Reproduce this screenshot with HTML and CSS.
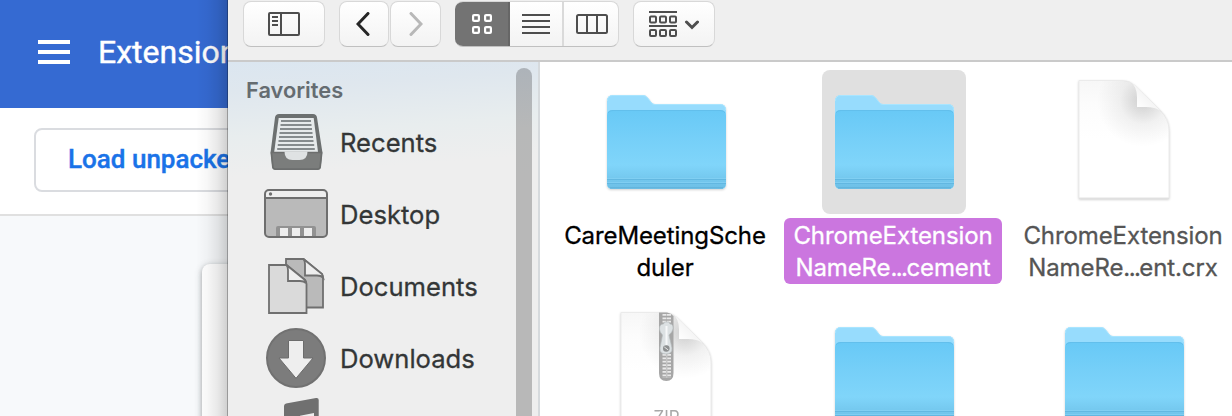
FILE: index.html
```html
<!DOCTYPE html>
<html lang="en">
<head>
<meta charset="utf-8">
<title>Extensions</title>
<link rel="stylesheet" href="styles.css">
</head>
<body>
<svg class="defs" width="0" height="0" aria-hidden="true">
  <defs>
    <linearGradient id="folderFront" x1="0" y1="0" x2="0" y2="1">
      <stop offset="0" stop-color="#68c9f6"/>
      <stop offset=".35" stop-color="#75cff8"/>
      <stop offset=".7" stop-color="#80d5fa"/>
      <stop offset=".86" stop-color="#75c9ef"/>
      <stop offset="1" stop-color="#6dbfe6"/>
    </linearGradient>
    <linearGradient id="paper" x1="0" y1="0" x2="0" y2="1">
      <stop offset="0" stop-color="#f7f7f7"/>
      <stop offset=".2" stop-color="#fcfcfc"/>
      <stop offset=".5" stop-color="#ffffff"/>
    </linearGradient>
    <radialGradient id="foldShade" gradientUnits="userSpaceOnUse" cx="91" cy="31" r="46">
      <stop offset="0" stop-color="#000" stop-opacity=".18"/>
      <stop offset=".2" stop-color="#000" stop-opacity=".13"/>
      <stop offset=".5" stop-color="#000" stop-opacity=".05"/>
      <stop offset="1" stop-color="#000" stop-opacity="0"/>
    </radialGradient>
    <linearGradient id="fold" gradientUnits="userSpaceOnUse" x1="85" y1="38" x2="96" y2="27">
      <stop offset="0" stop-color="#ffffff"/>
      <stop offset="1" stop-color="#f4f4f4"/>
    </linearGradient>
    <symbol id="folder" viewBox="0 0 144 144">
      <path d="M13 31q0-6 6-6h30q3 0 5 3l4 5q1 1 3 1h65q6 0 6 6v74q0 5-5 5H18q-5 0-5-5z" fill="#97dcfd"/>
      <path d="M13.500 31q0-5.500 5.500-5.500h30q3 0 5 3l4 5q1 1 3 1h65q5.500 0 5.500 5.500" fill="none" stroke="#a9e5ff"/>
      <path d="M13 46q0-6 5-6h109q5 0 5 6v67q0 5-4 5.500H17q-4-.5-4-5.500z" fill="url(#folderFront)"/>
      <path d="M14 43q1-2.500 5-2.500h107q4 0 5 2.500" fill="none" stroke="#62bfec"/>
      <path d="M13 109.500h119M13 113.500h119" stroke="#5fb5df" opacity=".8"/>
      <path d="M13 108.500h119M13 112.500h119" stroke="#86d3f5" opacity=".7"/>
      <path d="M16 118h113" stroke="#58abd3"/>
    </symbol>
    <symbol id="sheet" viewBox="0 0 144 144">
      <path d="M27 10.500h44q7 0 12 5L108 40q9 9 9 20v68H27z" fill="url(#paper)" stroke="#ebebeb"/>
      <path d="M27 11h44q7 0 12 5L108 40q8.500 9 8.500 20v25H27z" fill="url(#foldShade)"/>
      <path d="M79 12.500Q85 17 85 27v10h9q9 0 15 4L83.500 16z" fill="url(#fold)"/>
      <path d="M27 128.300h90" stroke="#e2e2e2"/>
    </symbol>
  </defs>
</svg>

<main class="browser">
  <header class="app-bar">
    <svg class="menu-icon" width="32" height="24" viewBox="0 0 32 24"><path d="M0 2h32M0 12h32M0 22h32" stroke="#fff" stroke-width="4"/></svg>
    <h1 class="app-title">Extensions</h1>
  </header>
  <div class="dev-bar"><button class="load-button">Load unpacked</button></div>
  <section class="cards"><article class="card"></article></section>
</main>

<section class="finder">
  <div class="toolbar">
    <div class="tool tool-sidebar">
      <svg width="32" height="24" viewBox="0 0 32 24" fill="none" stroke="#4e4e4e" stroke-width="2"><rect x="1" y="1" width="30" height="22" rx="1"/><path d="M13 1v22M4 5h6M4 9h6M4 13h6"/></svg>
    </div>
    <div class="nav">
      <div class="tool tool-back">
        <svg width="14" height="24" viewBox="0 0 14 24" fill="none" stroke="#262626" stroke-width="3" stroke-linecap="round"><path d="M12 1.500 2 12l10 10.500"/></svg>
      </div>
      <div class="tool tool-forward">
        <svg width="14" height="24" viewBox="0 0 14 24" fill="none" stroke="#b8b8b8" stroke-width="3" stroke-linecap="round"><path d="M2 1.500 12 12 2 22.500"/></svg>
      </div>
    </div>
    <div class="tool views">
      <div class="view view-active">
        <svg width="20" height="20" viewBox="0 0 20 20" fill="none" stroke="#fff" stroke-width="2.200"><rect x="1.100" y="1.100" width="5.800" height="5.800" rx="1"/><rect x="13.100" y="1.100" width="5.800" height="5.800" rx="1"/><rect x="1.100" y="13.100" width="5.800" height="5.800" rx="1"/><rect x="13.100" y="13.100" width="5.800" height="5.800" rx="1"/></svg>
      </div>
      <div class="view">
        <svg width="28" height="20" viewBox="0 0 28 20" stroke="#4e4e4e" stroke-width="2"><path d="M0 1h28M0 7h28M0 13h28M0 19h28"/></svg>
      </div>
      <div class="view view-last">
        <svg width="32" height="20" viewBox="0 0 32 20" fill="none" stroke="#4e4e4e" stroke-width="2"><rect x="1" y="1" width="30" height="18" rx="1.500"/><path d="M11 1v18M21 1v18"/></svg>
      </div>
    </div>
    <div class="tool tool-group">
      <svg width="50" height="26" viewBox="0 0 50 26" fill="none" stroke="#4e4e4e" stroke-width="2"><path d="M0 1h28M0 15h28"/><rect x="1" y="5.500" width="6" height="6" rx="1"/><rect x="11" y="5.500" width="6" height="6" rx="1"/><rect x="21" y="5.500" width="6" height="6" rx="1"/><rect x="1" y="19" width="6" height="6" rx="1"/><rect x="11" y="19" width="6" height="6" rx="1"/><rect x="21" y="19" width="6" height="6" rx="1"/><path d="m37.500 11 5.500 5.500 5.500-5.500" stroke-width="3" stroke-linecap="round"/></svg>
    </div>
  </div>

  <div class="panes">
    <nav class="sidebar">
      <div class="places">
        <h2 class="places-title">Favorites</h2>
        <div class="place">
          <svg width="64" height="72" viewBox="0 0 64 72">
            <path d="M15 7h34q3.500 0 4 3.500L58.500 46 57 60q-.4 3-3.500 3h-42Q8.400 63 8 60L6.500 46 11 10.500Q11.500 7 15 7z" fill="#6c7070"/>
            <path d="M14.700 11h35L54 45H10.200z" fill="#e6eaeb"/>
            <path d="M17 14h30M16.500 18h31M16 22h32M15.500 26h33M15 30h34M14.500 34h35M13.800 38h36.400M13.200 42h37.600" stroke="#858b8d" stroke-width="2"/>
            <path d="M7.500 45.500h50L56 60q-.3 2-2.500 2h-42Q9.300 62 9 60z" fill="#7b7d7c" stroke="#6c6e6d" stroke-width="1.500"/>
            <path d="M20.500 44.500h23q0 8.500-8 8.500h-7q-8 0-8-8.500z" fill="#dfe2e3"/>
          </svg>
          <span class="place-name">Recents</span>
        </div>
        <div class="place">
          <svg width="64" height="72" viewBox="0 0 64 72">
            <rect x="1" y="11" width="62" height="47" rx="4" fill="#bababa"/>
            <path d="M1 19v-4q0-4 4-4h54q4 0 4 4v4z" fill="#eee"/>
            <path d="M12 58V49q0-2 2-2h36q2 0 2 2v9z" fill="#929292"/>
            <path d="M16 49h8v8h-8zM28 49h8v8h-8zM40 49h8v8h-8z" fill="#eee"/>
            <rect x="1" y="11" width="62" height="47" rx="4" fill="none" stroke="#6e6e6e" stroke-width="2"/>
            <path d="M1 19h62" stroke="#6e6e6e" stroke-width="2"/><circle cx="6.500" cy="15" r="1.700" fill="#6e6e6e"/>
          </svg>
          <span class="place-name">Desktop</span>
        </div>
        <div class="place">
          <svg width="64" height="72" viewBox="0 0 64 72" stroke="#6f6f6f" stroke-width="1.800">
            <path d="M22 8h17.500L58 23q1 1.500 1 4v29.500H22z" fill="#bababa"/>
            <path d="M39.500 8q1.500 2 1.500 5v11.500h12q4 0 6 2L58 23z" fill="#eee"/>
            <path d="M5 14h17.500L41 29q1.500 1.500 1.500 4v29H5z" fill="#dadada"/>
            <path d="M22.500 14q1.500 2 1.500 5v11h12q4 0 6 2L41 29z" fill="#eee"/>
          </svg>
          <span class="place-name">Documents</span>
        </div>
        <div class="place">
          <svg width="64" height="72" viewBox="0 0 64 72">
            <circle cx="32" cy="35" r="29" fill="#7c7c7c" stroke="#717171" stroke-width="2"/>
            <path d="M24.500 17.500h15V35H49L32 55.300 15 35h9.500z" fill="#eee" stroke="#6c6c6c"/>
          </svg>
          <span class="place-name">Downloads</span>
        </div>
        <div class="place">
          <svg width="64" height="72" viewBox="0 0 64 72">
            <path d="M20 11q0-2 2-2.500L52 3q2.700-.4 2.700 2v46H50V18L36 20.700V56H20z" fill="#707070"/>
          </svg>
        </div>
      </div>
      <div class="scroll-thumb"></div>
    </nav>

    <div class="files">
      <div class="file">
        <svg class="thumb" width="144" height="144"><use href="#folder"/></svg>
        <div class="file-name">CareMeetingSche<br>duler</div>
      </div>
      <div class="file file-selected">
        <svg class="thumb" width="144" height="144"><use href="#folder"/></svg>
        <div class="file-name">ChromeExtension<br>NameRe<span class="dots">...</span>cement</div>
      </div>
      <div class="file file-muted">
        <svg class="thumb" width="144" height="144"><use href="#sheet"/></svg>
        <div class="file-name">ChromeExtension<br>NameRe<span class="dots">...</span>ent.crx</div>
      </div>
      <div class="file">
        <svg class="thumb" width="144" height="144">
          <use href="#sheet"/>
          <path d="M65 10.500h8q5 1 6.500 4V71q0 8-7.200 8T65 71z" fill="#a6a6a6"/>
          <path d="M70.500 12v11M70.500 52v24M75 12v11M75 52v24" stroke="#e9e9e9" stroke-width="4" stroke-dasharray="1.800 1.600"/>
          <path d="M72.700 52v24" stroke="#c4c4c4" stroke-width="1.500"/>
          <path d="M65.500 27q0-5 4-5l1-2h4.500l1 2q3.500 0 3 5-.5 3-4 6l3 13q.5 6-6 6t-6-6l2.500-13q-3-3-3-6z" fill="#dce1e3" stroke="#b4babc" stroke-width=".7"/>
          <path d="M72.500 24v19" stroke="#f6f8f9" stroke-width="2"/>
          <circle cx="72.300" cy="46.500" r="3.300" fill="#8d9091"/><path d="m70.300 45 4 3" stroke="#e4e4e4"/>
          <text class="badge" x="72.500" y="121" text-anchor="middle">ZIP</text>
        </svg>
      </div>
      <div class="file">
        <svg class="thumb" width="144" height="144"><use href="#folder"/></svg>
      </div>
      <div class="file">
        <svg class="thumb" width="144" height="144"><use href="#folder"/></svg>
      </div>
    </div>
  </div>
</section>
</body>
</html>
```
FILE: styles.css
```css
* { box-sizing: border-box; }
html { height: 416px; overflow: hidden; }
body {
  margin: 0;
  width: 1232px;
  height: 416px;
  overflow: hidden;
  position: relative;
  background: #f7f9fb;
}
svg { display: block; flex: none; }
.defs { position: absolute; }

/* Browser page */
.browser { height: 416px; overflow: hidden; font-family: Roboto, sans-serif; }
.app-bar {
  height: 108px;
  padding: 0 38px 4px;
  display: flex;
  align-items: center;
  gap: 28px;
  background: #356ad2;
}
.app-title {
  margin: 0;
  font-size: 32px;
  font-weight: 400;
  line-height: 40px;
  color: #fff;
  -webkit-text-stroke: .4px #fff;
}
.dev-bar {
  height: 108px;
  padding: 20px 34px 0;
  background: #fff;
  border-bottom: 2px solid #e0e0e0;
}
.load-button {
  height: 64px;
  width: 230px;
  padding: 0 0 2px 32px;
  text-align: left;
  border: 2px solid #dadce0;
  border-radius: 8px;
  background: #fff;
  color: #1a73e8;
  font: 500 26px/32px Roboto, sans-serif;
  -webkit-text-stroke: .4px #1a73e8;
  white-space: nowrap;
}
.cards { padding: 48px 0 0 202px; }
.card {
  width: 800px;
  height: 320px;
  border-radius: 8px;
  background: #fff;
  box-shadow: 0 2px 4px rgba(60, 64, 67, .3), 0 2px 6px 2px rgba(60, 64, 67, .15);
}

/* Finder window, floating over the browser */
.finder {
  position: absolute;
  left: 228px;
  top: 0;
  width: 1004px;
  height: 416px;
  display: flex;
  flex-direction: column;
  background: #fff;
  font-family: Inter, sans-serif;
}
.finder::before {
  content: "";
  position: absolute;
  left: -32px;
  top: 0;
  width: 32px;
  height: 416px;
  background: linear-gradient(90deg, rgba(0,0,0,0), rgba(0,0,0,.03) 35%, rgba(0,0,0,.09) 68%, rgba(0,0,0,.18) 96%, rgba(0,0,0,.4) 97%);
}
.toolbar {
  height: 62px;
  flex: none;
  padding: 1px 15px 0;
  display: flex;
  align-items: flex-start;
  gap: 14px;
  background: #efefef;
  border-bottom: 2px solid #cacaca;
}
.tool {
  height: 46px;
  display: flex;
  align-items: center;
  justify-content: center;
  border: 1px solid #d8d8d8;
  border-bottom-color: #c0c0c0;
  border-radius: 8px;
  background: linear-gradient(#fff, #f3f3f3);
}
.tool-sidebar { width: 82px; }
.nav { display: flex; gap: 1px; }
.tool-back { width: 50px; padding-right: 2px; }
.tool-forward { width: 51px; }
.views { width: 164px; overflow: hidden; border-left: 0; justify-content: flex-start; }
.view {
  width: 54px;
  height: 46px;
  flex: none;
  display: flex;
  align-items: center;
  justify-content: center;
  border-right: 2px solid #dadada;
}
.view-active { width: 55px; background: #737373; border-right-color: #666; }
.view-last { width: 56px; border-right: 0; }
.tool-group { width: 82px; padding-bottom: 1px; }

.panes { flex: 1; min-height: 0; display: flex; overflow: hidden; }
.sidebar {
  width: 312px;
  flex: none;
  padding: 6px 6px 0 18px;
  display: flex;
  justify-content: space-between;
  border-right: 2px solid #d6dadd;
  background: linear-gradient(176deg, #dbe6f0 0, #dfe7ee 30px, #e8edee 75px, #eee 115px);
}
.places-title {
  margin: 0;
  height: 39px;
  padding-top: 7px;
  font-size: 21.800px;
  line-height: 30px;
  font-weight: 600;
  color: #656c71;
}
.place {
  height: 72px;
  margin-left: 18px;
  display: flex;
  align-items: center;
  gap: 12px;
}
.place-name {
  font-size: 25.600px;
  line-height: 32px;
  color: #333637;
  -webkit-text-stroke: .3px #333637;
}
.scroll-thumb {
  width: 16px;
  height: 500px;
  border-radius: 8px;
  background: linear-gradient(#adb3b9, #b7b8b8 60px, #b8b8b8 110px);
}

.files {
  flex: 1;
  padding: 8px 0 0 12px;
  display: grid;
  grid-template-columns: 228px 228px 232px;
  grid-auto-rows: 232px;
}
.file { display: flex; flex-direction: column; align-items: center; }
.thumb { border-radius: 8px; filter: drop-shadow(0 1px 1px rgba(0,0,0,.18)); }
.file-name {
  width: 218px;
  height: 66px;
  margin: 4px 2px 0 0;
  padding-top: 2px;
  border-radius: 6px;
  text-align: center;
  white-space: nowrap;
  font-size: 24px;
  letter-spacing: -.1px;
  line-height: 32px;
  color: #000;
  -webkit-text-stroke: .3px currentColor;
}
.dots { letter-spacing: -1.600px; }
.file-selected .thumb { background: #e0e0e0; filter: none; }
.file-selected .file-name { background: #cb76df; color: #fff; }
.file-muted .file-name { color: #555; }
.badge { font: 400 17px Inter, sans-serif; fill: #a8a8a8; }
```
